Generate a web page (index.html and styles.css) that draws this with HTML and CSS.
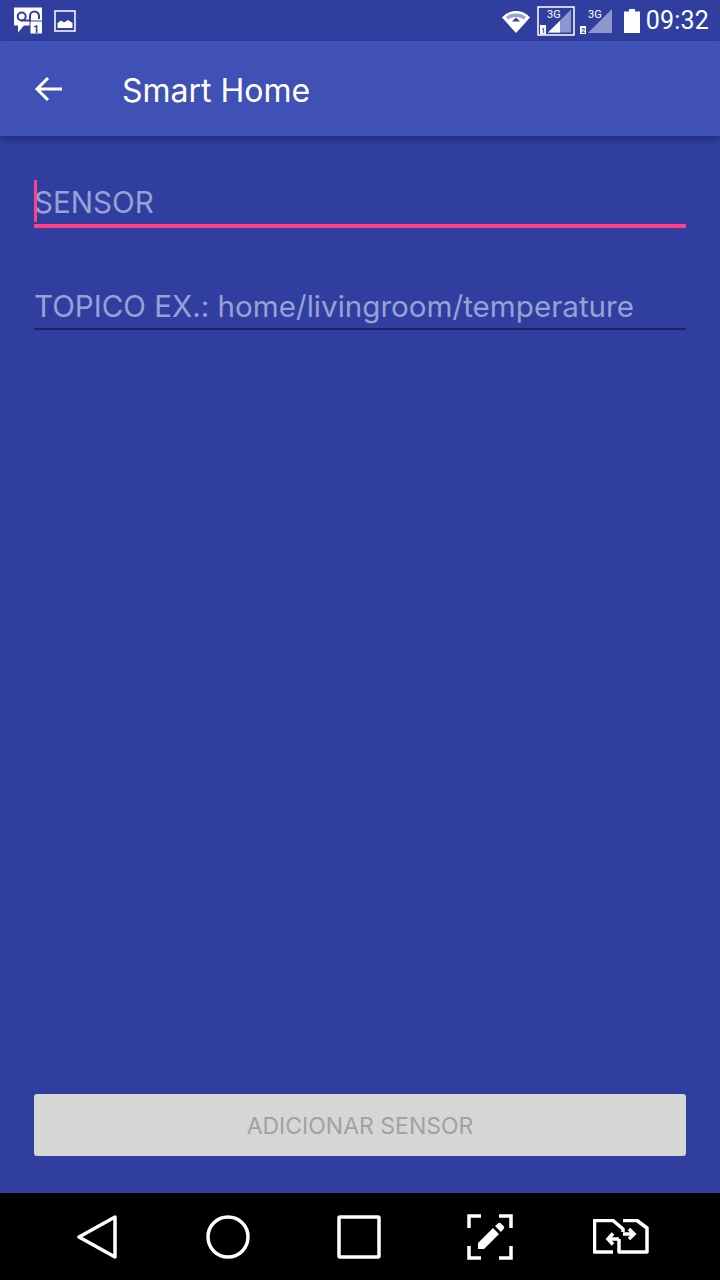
FILE: index.html
```html
<!DOCTYPE html>
<html lang="en">
<head>
    <meta charset="UTF-8">
    <meta name="viewport" content="width=device-width, initial-scale=1.0">
    <title>Smart Home</title>
    <link rel="stylesheet" href="styles.css">
</head>
<body>
<div class="screen">
    <div class="status-bar">
        <div class="status-left">
            <svg width="30" height="30" viewBox="0 0 30 30">
                <path fill="#fff" d="M0 1.500H28V19.500H10L4 26.500V19.500H0Z"/>
                <circle cx="7.700" cy="10.500" r="4" fill="none" stroke="#303f9f" stroke-width="2"/>
                <path fill="none" stroke="#303f9f" stroke-width="2" d="M7 14.500H17M16 14V10a4.500 4.500 0 0 1 9 0v3"/>
                <rect x="16" y="15" width="12.500" height="13" fill="#fff" stroke="#303f9f" stroke-width="1"/>
                <text x="19" y="26.500" class="badge-number">1</text>
            </svg>
            <svg width="24" height="22" viewBox="0 0 24 22">
                <rect x="1" y="1" width="20" height="20" fill="none" stroke="#fff" stroke-width="1.500"/>
                <path fill="#fff" d="M3.500 18V13L7 10.500L10 12.500L14 10L18.500 13V18Z"/>
            </svg>
        </div>
        <div class="status-right">
            <svg class="wifi" width="30" height="24" viewBox="0 0 30 24">
                <path fill="#fff" d="M15 24L1 8.500C5 4 10 2 15 2S25 4 29 8.500Z"/>
                <path fill="#9aa3d6" d="M5 8C8 5.500 11 4.500 15 4.500S22 5.500 25 8L23 10.500C20.500 9 18 8 15 8S9.500 9 7 10.500Z"/>
                <path fill="#303f9f" d="M15 8.500L19 12.500H11Z"/>
            </svg>
            <svg class="sim-one" width="38" height="30" viewBox="0 0 38 30">
                <rect x="1" y="1" width="36" height="28" fill="none" stroke="#fff" stroke-width="1.500"/>
                <path fill="#8f97cf" d="M34 3.500V26.500H11Z"/>
                <path fill="#fff" d="M23 15V26.500H11Z"/>
                <rect x="3" y="19" width="6" height="9" fill="#fff"/>
                <text x="4.200" y="26.500" class="sim-number">1</text>
                <text x="10" y="12" class="net-label">3G</text>
            </svg>
            <svg class="sim-two" width="34" height="30" viewBox="0 0 34 30">
                <path fill="#8f97cf" d="M33 3V27H9Z"/>
                <rect x="1" y="20" width="6" height="8" fill="#fff"/>
                <text x="2.200" y="27" class="sim-number">2</text>
                <text x="9" y="12" class="net-label">3G</text>
            </svg>
            <svg class="battery" width="16" height="24" viewBox="0 0 16 24">
                <path fill="#fff" d="M5 0H11V2.500H16V24H0V2.500H5Z"/>
            </svg>
            <span class="clock">09:32</span>
        </div>
    </div>

    <div class="toolbar">
        <svg class="back" width="28" height="28" viewBox="0 0 28 28">
            <path fill="none" stroke="#fff" stroke-width="3" d="M28 14H3M14 3L3 14L14 25"/>
        </svg>
        <h1>Smart Home</h1>
    </div>

    <div class="content">
        <form class="sensor-form">
            <div class="field field-active">
                <span class="caret"></span>
                <span class="placeholder">SENSOR</span>
            </div>
            <div class="field">
                <span class="placeholder">TOPICO EX.: home/livingroom/temperature</span>
            </div>
        </form>
        <button class="add-button" type="button" disabled>ADICIONAR SENSOR</button>
    </div>

    <div class="nav-bar">
        <svg width="40" height="46" viewBox="0 0 40 46">
            <path fill="none" stroke="#fff" stroke-width="3.500" stroke-linejoin="round" d="M38 3V43L2 23Z"/>
        </svg>
        <svg width="46" height="46" viewBox="0 0 46 46">
            <circle cx="23" cy="23" r="20" fill="none" stroke="#fff" stroke-width="3.500"/>
        </svg>
        <svg width="46" height="46" viewBox="0 0 46 46">
            <rect x="3" y="3" width="40" height="40" rx="1" fill="none" stroke="#fff" stroke-width="3.500"/>
        </svg>
        <svg width="46" height="46" viewBox="0 0 46 46">
            <path fill="none" stroke="#fff" stroke-width="3.500" d="M14 2H2V14M32 2H44V14M2 32V44H14M44 32V44H32"/>
            <path fill="#fff" d="M11 29L26 14L32 20L17 35H11ZM28 12L31 9.500C32 8.500 33 8.500 34 9.500L36.500 12C37.500 13 37.500 14 36.500 15L34 18Z"/>
        </svg>
        <svg width="56" height="36" viewBox="0 0 56 36">
            <path fill="none" stroke="#fff" stroke-width="3.500" stroke-linejoin="round" d="M20 33H1.500V1.500H20L30 10V13M30 1.500H44L54 9V33H26V20"/>
            <path fill="none" stroke="#fff" stroke-width="3.500" d="M30 15H41M36 10L41 15L36 20M26 20H15M20 14.500L15 20L20 25.500"/>
        </svg>
    </div>
</div>
</body>
</html>
```

FILE: styles.css
```css
*{
    box-sizing: border-box;
}
body{
    margin: 0;
    font-family: Inter, Roboto, sans-serif;
}
.screen{
    display: flex;
    flex-direction: column;
    width: 720px;
    height: 1280px;
    background-color: #303f9f;
}
.status-bar{
    display: flex;
    justify-content: space-between;
    align-items: center;
    flex-shrink: 0;
    height: 41px;
    padding: 0 11px 0 14px;
    background-color: #303f9f;
}
.status-left{
    display: flex;
    align-items: center;
    gap: 10px;
}
.status-right{
    display: flex;
    align-items: center;
    color: #fff;
}
.wifi{
    margin-right: 6px;
}
.sim-one{
    margin-right: 4px;
}
.sim-two{
    margin-right: 11px;
}
.battery{
    margin-right: 6px;
}
.badge-number{
    fill: #303f9f;
    font-family: Roboto, sans-serif;
    font-size: 11px;
    font-weight: 700;
}
.net-label{
    fill: #fff;
    font-family: Roboto, sans-serif;
    font-size: 11px;
}
.sim-number{
    fill: #303f9f;
    font-family: Roboto, sans-serif;
    font-size: 7px;
    font-weight: 700;
}
.clock{
    font-family: Roboto, sans-serif;
    font-size: 25px;
    letter-spacing: 0.2px;
}
.toolbar{
    display: flex;
    align-items: center;
    flex-shrink: 0;
    height: 95px;
    padding-left: 34px;
    background-color: #3f51b5;
    box-shadow: 0 3px 7px rgba(0, 0, 0, 0.3);
    position: relative;
}
.toolbar h1{
    margin: 3px 0 0 60px;
    font-size: 32px;
    font-weight: 400;
    color: #fff;
}
.content{
    display: flex;
    flex-direction: column;
    justify-content: space-between;
    flex: 1;
    padding: 44px 34px 37px;
}
.sensor-form{
    display: flex;
    flex-direction: column;
    gap: 54px;
}
.field{
    display: flex;
    align-items: center;
    height: 48px;
    padding-top: 2px;
    border-bottom: 2px solid #1a2263;
}
.field-active{
    position: relative;
    padding-top: 0;
    border-bottom: 4px solid #ff4081;
}
.caret{
    position: absolute;
    left: 0;
    top: 0;
    width: 3px;
    height: 42px;
    background-color: #ff4081;
}
.placeholder{
    font-size: 29.600px;
    color: #98a0d6;
}
.add-button{
    width: 100%;
    height: 62px;
    padding: 2px 0 0;
    border: none;
    border-radius: 3px;
    font-family: inherit;
    font-size: 23px;
    color: #a0a2a2;
    background-color: #d5d7d6;
}
.nav-bar{
    display: grid;
    grid-template-columns: repeat(5, 131px);
    justify-items: center;
    align-items: center;
    flex-shrink: 0;
    height: 87px;
    padding-left: 31px;
    background-color: #000;
}
```
